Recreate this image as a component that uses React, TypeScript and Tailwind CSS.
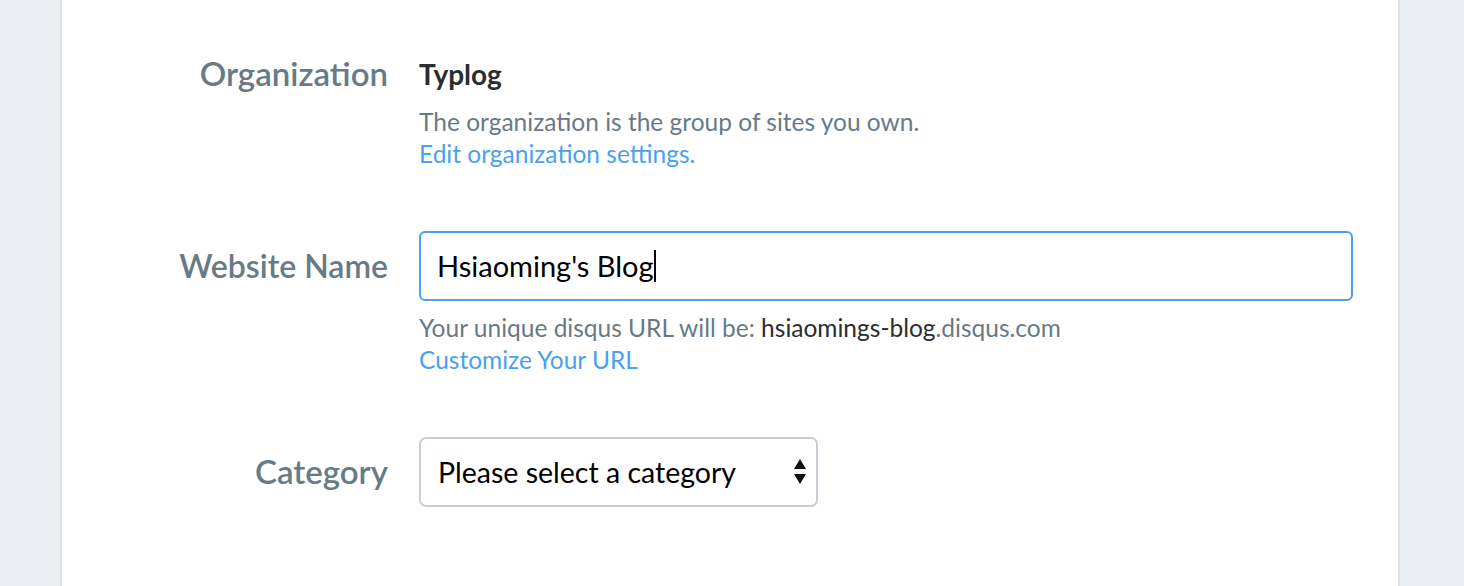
export default function App() {
	return (
		<div
			className="min-h-[586px] bg-[#eaedf2] flex"
			style={{ fontFamily: "Lato, 'Noto Sans', sans-serif" }}
		>
			<div className="ml-[60px] w-[1340px] min-h-[586px] bg-white border-x-2 border-[#dde2e8] pt-[53px] pr-[45px]">
				<div className="flex flex-col gap-[61px]">
					{/* Organization */}
					<div className="grid grid-cols-[326px_1fr] gap-x-[31px]">
						<div className="text-right text-[33px] leading-[40px] font-semibold text-[#687a86]">
							Organization
						</div>
						<div>
							<div className="text-[28px] leading-[42px] font-bold text-[#2a2e2e]">
								Typlog
							</div>
							<p className="mt-[11px] text-[24.5px] leading-[32px] text-[#687a86]">
								The organization is the group of sites you own.
							</p>
							<a className="block text-[24.5px] leading-[32px] text-[#4b9ff2]" href="#">
								Edit organization settings.
							</a>
						</div>
					</div>

					{/* Website name */}
					<div className="grid grid-cols-[326px_1fr] gap-x-[31px]">
						<div className="h-[70px] flex items-center justify-end text-[32px] font-semibold text-[#687a86]">
							Website Name
						</div>
						<div>
							<div className="h-[70px] border-2 border-[#4ba0f5] rounded-[6px] flex items-center px-[16px] text-[29px] text-black">
								<span>Hsiaoming's Blog</span>
								<span className="w-[2px] h-[32px] bg-black" />
							</div>
							<p className="mt-[11px] text-[24.5px] leading-[32px] text-[#687a86]">
								Your unique disqus URL will be:{" "}
								<span className="text-[#2a2e2e]">hsiaomings-blog</span>.disqus.com
							</p>
							<a className="block text-[24.5px] leading-[32px] text-[#4b9ff2]" href="#">
								Customize Your URL
							</a>
						</div>
					</div>

					{/* Category */}
					<div className="grid grid-cols-[326px_1fr] gap-x-[31px]">
						<div className="h-[70px] flex items-center justify-end text-[33px] font-semibold text-[#687a86]">
							Category
						</div>
						<div>
							<div className="w-[399px] h-[70px] border-2 border-[#c8ced8] rounded-[7px] flex items-center justify-between pl-[17px] pr-[9px] text-[28.5px] text-black">
								<span>Please select a category</span>
								<svg width="14" height="26" viewBox="0 0 14 26" fill="#111">
									<polygon points="7,0 13,10 1,10" />
									<polygon points="1,15 13,15 7,25" />
								</svg>
							</div>
						</div>
					</div>
				</div>
			</div>
		</div>
	);
}
